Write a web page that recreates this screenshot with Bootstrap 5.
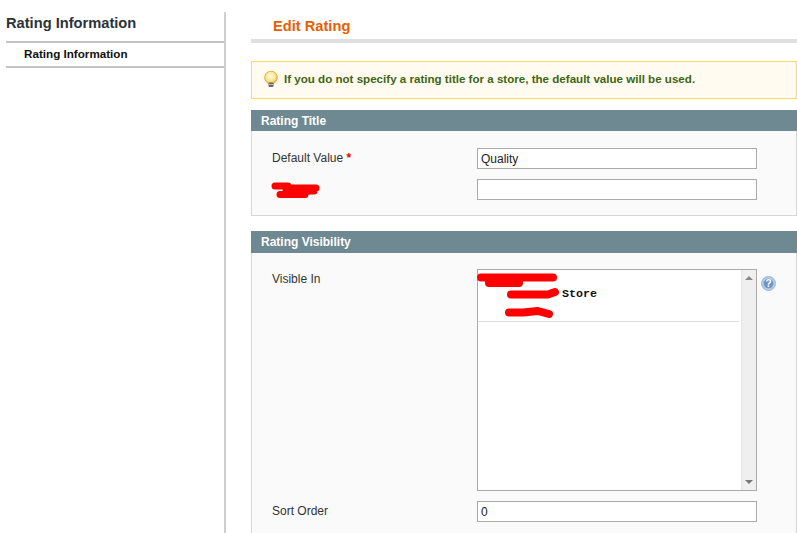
<!DOCTYPE html>
<html lang="en">
<head>
<meta charset="utf-8">
<title>Edit Rating</title>
<link href="https://cdn.jsdelivr.net/npm/bootstrap@5.3.0/dist/css/bootstrap.min.css" rel="stylesheet">
<style>
html,body{height:533px;overflow:hidden;background:#fff}
body{font-family:"Liberation Sans",Arial,sans-serif;font-size:12px;color:#2f2f2f}
.shell{height:533px;padding:12px 0 0 6px}
.side{width:220px;flex:none;border-right:2px solid #cfcfcf;height:521px}
.side-head{height:31px;border-bottom:2px solid #c4c4c4;font-size:14.67px;font-weight:700;color:#2b3238;line-height:22px}
.side-item{height:25px;border-bottom:2px solid #c4c4c4;padding-left:18px;font-weight:700;font-size:11.67px;line-height:22px;color:#111}
.main-area{width:546px;flex:none;margin-left:25px}
.page-title{height:31px;border-bottom:4px solid #dfdfdf;padding-left:22px;font-size:14.67px;font-weight:700;color:#eb5e00;line-height:28px}
.notice{margin-top:18px;height:38px;background:#fffbf0;border:1px solid #ffd967;color:#3d6611;font-weight:700;font-size:11.58px;padding:0 0 1px 11px;gap:5px}
.sect-head{background:#6f8992;color:#fff;font-weight:700;font-size:12px;line-height:22px;padding-left:10px}
.first-head{margin-top:11px;height:21px}
.second-head{margin-top:15px;height:22px}
.sect-body{background:#fafafa;border:1px solid #d6d6d6;border-top:0;padding:17px 0 15px 20px}
.sect-open{border-bottom:0;padding:16px 0 0 20px;height:280px}
.lbl{width:205px;flex:none;font-size:12px;color:#333;line-height:20px}
.req{color:#e00;font-weight:700}
.fld{width:280px;height:21px;border:1px solid #aaa;background:#fff;font-size:12px;color:#222;padding:3px 3px 0;line-height:15px}
.gap-row{margin-top:10px}
.label-mask{position:relative}
.scrib{position:absolute;overflow:visible;pointer-events:none}
.listbox{width:280px;height:222px;border:1px solid #aaa;background:#fff;position:relative}
.opts{flex:1 1 auto;font-family:"Liberation Mono",monospace;font-weight:700;font-size:11.67px;color:#111}
.opts-top{height:52px;border-bottom:1px solid #dcdcdc;margin-right:2px;padding:17px 0 0 84px;line-height:14px}
.sbar{width:15px;flex:none;background:#efefef;border-left:1px solid #e4e4e4}
.tri-up,.tri-down{width:0;height:0;border-left:4px solid transparent;border-right:4px solid transparent;margin-left:3px}
.tri-up{border-bottom:4px solid #888;margin-top:6px}
.tri-down{border-top:4px solid #777;margin-bottom:6px}
.help-ic{margin-left:4px;margin-top:7px;flex:none}
.sort-row{margin-top:10px}
</style>
</head>
<body>
<div class="shell d-flex">
  <aside class="side">
    <div class="side-head">Rating Information</div>
    <div class="side-item">Rating Information</div>
  </aside>
  <main class="main-area">
    <div class="page-title">Edit Rating</div>
    <div class="notice d-flex align-items-center">
      <svg width="16" height="17" viewBox="0 0 16 17" aria-hidden="true">
        <defs><radialGradient id="bulb" cx=".45" cy=".4" r=".6"><stop offset="0" stop-color="#fffbe0"/><stop offset=".65" stop-color="#ffe58e"/><stop offset="1" stop-color="#f0b040"/></radialGradient></defs>
        <circle cx="8" cy="6.5" r="6.3" fill="url(#bulb)" stroke="#e8ac48" stroke-width="1"/>
        <rect x="5.5" y="11.5" width="5" height="4.5" rx="1" fill="#666"/>
        <rect x="5.5" y="13" width="5" height="1" fill="#bbb"/>
      </svg>
      <span>If you do not specify a rating title for a store, the default value will be used.</span>
    </div>

    <div class="sect-head first-head">Rating Title</div>
    <div class="sect-body">
      <div class="d-flex">
        <div class="lbl">Default Value <span class="req">*</span></div>
        <div class="fld">Quality</div>
      </div>
      <div class="d-flex gap-row">
        <div class="lbl label-mask">
          <svg class="scrib" style="left:0;top:3px" width="48" height="16" viewBox="0 0 48 16" aria-hidden="true">
            <path d="M3 4H16M20 6H44M14 9H42M8 12.5H33" fill="none" stroke="#f00" stroke-width="7" stroke-linecap="round"/>
          </svg>
        </div>
        <div class="fld"></div>
      </div>
    </div>

    <div class="sect-head second-head">Rating Visibility</div>
    <div class="sect-body sect-open">
      <div class="d-flex">
        <div class="lbl">Visible In</div>
        <div class="listbox d-flex">
          <div class="opts">
            <div class="opts-top">Store</div>
            <svg class="scrib" style="left:0;top:0" width="90" height="50" viewBox="0 0 90 50" aria-hidden="true">
              <path d="M3 7.5H75M11 13H41M33 24.5H70L77 22M31 42.5H45L60 41L71 44" fill="none" stroke="#f00" stroke-width="8" stroke-linecap="round" stroke-linejoin="round"/>
            </svg>
          </div>
          <div class="sbar d-flex flex-column justify-content-between">
            <div class="tri-up"></div>
            <div class="tri-down"></div>
          </div>
        </div>
        <svg class="help-ic" width="15" height="15" viewBox="0 0 15 15" aria-hidden="true">
          <circle cx="7.5" cy="7.5" r="7" fill="#b4cbe6" stroke="#9ab8da"/>
          <circle cx="7.5" cy="7.5" r="4.8" fill="#6f93c4"/>
          <text x="7.5" y="11" text-anchor="middle" font-family="Liberation Sans" font-size="10" font-weight="700" fill="#fff">?</text>
        </svg>
      </div>
      <div class="d-flex sort-row">
        <div class="lbl">Sort Order</div>
        <div class="fld">0</div>
      </div>
    </div>
  </main>
</div>
<script src="https://cdn.jsdelivr.net/npm/bootstrap@5.3.0/dist/js/bootstrap.bundle.min.js"></script>
</body>
</html>
